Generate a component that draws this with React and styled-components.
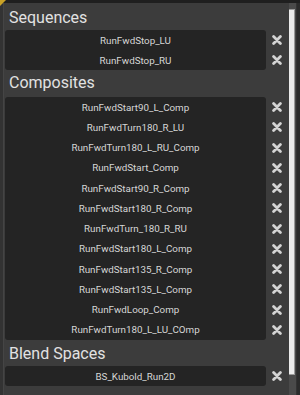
import React from 'react';
import styled, { createGlobalStyle } from 'styled-components';

const GlobalStyle = createGlobalStyle`
  html, body { margin: 0; padding: 0; background: #3c3c3c; }
  body { font-family: Roboto, "Liberation Sans", sans-serif; }
`;

const Frame = styled.div`
  width: 300px;
  height: 395px;
  display: flex;
  flex-direction: column;
  background: #3c3c3c;
  overflow: hidden;
  position: relative;
`;

const TopBar = styled.div`
  height: 3px;
  flex: none;
  background: #1f1f1f;
`;

const Corner = styled.div`
  position: absolute;
  left: 0;
  top: 0;
  width: 0;
  height: 0;
  border-top: 6px solid #c9a227;
  border-right: 6px solid transparent;
`;

const Main = styled.div`
  flex: 1;
  display: flex;
  min-height: 0;
`;

const LeftEdge = styled.div`
  width: 3px;
  flex: none;
  background: #333333;
  border-right: 1px solid #454545;
`;

const Content = styled.div`
  flex: 1;
  display: flex;
  flex-direction: column;
  padding-left: 1px;
`;

const Header = styled.div`
  height: ${p => p.$h || 26}px;
  box-sizing: border-box;
  padding: ${p => p.$pt || 2}px 0 0 4px;
  font-size: 16px;
  line-height: 24px;
  color: #e2e2e2;
`;

const Body = styled.div`
  display: flex;
`;

const NameBox = styled.div`
  width: 261px;
  background: #242424;
  border-radius: 3px;
  display: flex;
  flex-direction: column;
`;

const Name = styled.div`
  height: ${p => p.$h || 20}px;
  display: flex;
  align-items: center;
  justify-content: center;
  font-size: 9.8px;
  color: #d6d6d6;
  white-space: nowrap;
`;

const IconCol = styled.div`
  width: 20px;
  display: flex;
  flex-direction: column;
`;

const IconCell = styled.div`
  height: ${p => p.$h || 20}px;
  display: flex;
  align-items: center;
  justify-content: center;
  padding-left: 1px;
`;

const Scroll = styled.div`
  width: 16px;
  flex: none;
  display: flex;
  padding-left: 3px;
  box-sizing: border-box;
`;

const Track = styled.div`
  width: 7px;
  background: #4a4a4a;
  display: flex;
  flex-direction: column;
  padding-top: 6px;
`;

const Thumb = styled.div`
  width: 6px;
  height: 366px;
  background: #ececec;
  border: 1px solid #9a9a9a;
  border-left: none;
  box-sizing: border-box;
`;

const OuterEdge = styled.div`
  flex: 1;
  background: #2b2b2b;
  border-left: 1px solid #333;
`;

const Cross = () => (
  <svg width="10" height="10" viewBox="0 0 10 10">
    <path d="M1.6 1.6 L8.4 8.4 M8.4 1.6 L1.6 8.4" stroke="#d4d4d4" strokeWidth="2.8" strokeLinecap="round" />
  </svg>
);

const Section = ({ title, items, h, pt, rowH }) => (
  <>
    <Header $h={h} $pt={pt}>{title}</Header>
    <Body>
      <NameBox>
        {items.map(n => <Name key={n} $h={rowH}>{n}</Name>)}
      </NameBox>
      <IconCol>
        {items.map(n => <IconCell key={n} $h={rowH}><Cross /></IconCell>)}
      </IconCol>
    </Body>
  </>
);

const composites = [
  'RunFwdStart90_L_Comp',
  'RunFwdTurn180_R_LU',
  'RunFwdTurn180_L_RU_Comp',
  'RunFwdStart_Comp',
  'RunFwdStart90_R_Comp',
  'RunFwdStart180_R_Comp',
  'RunFwdTurn_180_R_RU',
  'RunFwdStart180_L_Comp',
  'RunFwdStart135_R_Comp',
  'RunFwdStart135_L_Comp',
  'RunFwdLoop_Comp',
  'RunFwdTurn180_L_LU_COmp',
];

export default function App() {
  return (
    <>
      <GlobalStyle />
      <Frame>
        <Corner />
        <TopBar />
        <Main>
          <LeftEdge />
          <Content>
            <Section title="Sequences" items={['RunFwdStop_LU', 'RunFwdStop_RU']} h={27} pt={3} />
            <Section title="Composites" items={composites} h={27} pt={1} rowH={20.25} />
            <Section title="Blend Spaces" items={['BS_Kubold_Run2D']} h={26} pt={2} />
          </Content>
          <Scroll>
            <Track>
              <Thumb />
            </Track>
            <OuterEdge />
          </Scroll>
        </Main>
      </Frame>
    </>
  );
}
